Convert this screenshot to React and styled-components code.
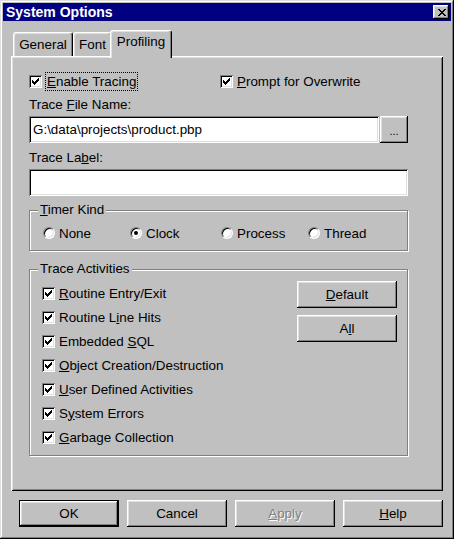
import React from "react";
import styled, { createGlobalStyle, css } from "styled-components";

const GlobalStyle = createGlobalStyle`
  html, body {
    margin: 0;
    padding: 0;
    background: #c0c0c0;
  }
  body {
    font-family: "Liberation Sans", Arial, sans-serif;
    font-size: 13.4px;
    color: #000;
  }
`;

const raised = css`
  box-shadow: inset -1px -1px #000, inset 1px 1px #fff, inset -2px -2px #808080,
    inset 2px 2px #dfdfdf;
`;

const sunken = css`
  box-shadow: inset 1px 1px #808080, inset -1px -1px #fff, inset 2px 2px #000,
    inset -2px -2px #dfdfdf;
`;

const CHECK = "M6 0h1v1h-1z M5 1h2v1h-2z M0 2h1v1h-1z M4 2h3v1h-3z M0 3h2v1h-2z M3 3h3v1h-3z M0 4h5v1h-5z M1 5h3v1h-3z M2 6h1v1h-1z";
const CROSS = "M0 0h2v1h-2z M6 0h2v1h-2z M1 1h2v1h-2z M5 1h2v1h-2z M2 2h4v1h-4z M3 3h2v1h-2z M2 4h4v1h-4z M1 5h2v1h-2z M5 5h2v1h-2z M0 6h2v1h-2z M6 6h2v1h-2z";

const activities = [
  { pre: "", key: "R", post: "outine Entry/Exit" },
  { pre: "Routine L", key: "i", post: "ne Hits" },
  { pre: "Embedded ", key: "S", post: "QL" },
  { pre: "", key: "O", post: "bject Creation/Destruction" },
  { pre: "", key: "U", post: "ser Defined Activities" },
  { pre: "S", key: "y", post: "stem Errors" },
  { pre: "", key: "G", post: "arbage Collection" },
];

const timers = ["None", "Clock", "Process", "Thread"];

function CheckBox() {
  return (
    <Box>
      <svg width="7" height="7" viewBox="0 0 7 7" shapeRendering="crispEdges">
        <path d={CHECK} fill="#000" />
      </svg>
    </Box>
  );
}

export default function App() {
  return (
    <>
      <GlobalStyle />
      <Window>
        <TitleBar>
          <Title>System Options</Title>
          <CloseButton>
            <svg width="8" height="7" viewBox="0 0 8 7" shapeRendering="crispEdges">
              <path d={CROSS} fill="#000" />
            </svg>
          </CloseButton>
        </TitleBar>
        <Body>
          <TabStrip>
            <Tab $w={60}>General</Tab>
            <Tab $w={39}>Font</Tab>
            <Tab $w={58} $active>
              Profiling
            </Tab>
          </TabStrip>
          <Panel>
            <TopRow>
              <CheckItem>
                <CheckBox />
                <Focus>
                  <U>E</U>nable Tracing
                </Focus>
              </CheckItem>
              <CheckItem>
                <CheckBox />
                <span>
                  <U>P</U>rompt for Overwrite
                </span>
              </CheckItem>
            </TopRow>

            <FieldLabel>
              Trace <U>F</U>ile Name:
            </FieldLabel>
            <InputRow>
              <TextBox>G:\data\projects\product.pbp</TextBox>
              <BrowseButton>...</BrowseButton>
            </InputRow>

            <FieldLabel>
              Trace La<U>b</U>el:
            </FieldLabel>
            <InputRow>
              <TextBox />
            </InputRow>

            <TimerGroup>
              <GroupTitle>
                <U>T</U>imer Kind
              </GroupTitle>
              {timers.map((t) => (
                <RadioItem key={t}>
                  <Radio $checked={t === "Clock"} />
                  {t}
                </RadioItem>
              ))}
            </TimerGroup>

            <ActivityGroup>
              <GroupTitle>Trace Activities</GroupTitle>
              <ActivityList>
                {activities.map((a) => (
                  <ActivityRow key={a.pre + a.key + a.post}>
                    <CheckBox />
                    <span>
                      {a.pre}
                      <U>{a.key}</U>
                      {a.post}
                    </span>
                  </ActivityRow>
                ))}
              </ActivityList>
              <SideButtons>
                <Button>
                  <U>D</U>efault
                </Button>
                <Button>
                  A<U>l</U>l
                </Button>
              </SideButtons>
            </ActivityGroup>
          </Panel>
          <Footer>
            <Button $default>OK</Button>
            <Button>Cancel</Button>
            <Button $disabled>
              <U>A</U>pply
            </Button>
            <Button>
              <U>H</U>elp
            </Button>
          </Footer>
        </Body>
      </Window>
    </>
  );
}

const Window = styled.div`
  width: 454px;
  height: 539px;
  box-sizing: border-box;
  padding: 3px;
  background: #c0c0c0;
  display: flex;
  flex-direction: column;
  box-shadow: inset -1px -1px #000, inset 1px 1px #dfdfdf, inset -2px -2px #808080,
    inset 2px 2px #fff;
`;

const TitleBar = styled.div`
  height: 18px;
  flex: none;
  background: #000080;
  display: flex;
  align-items: center;
  justify-content: space-between;
  padding: 0 2px 0 3px;
`;

const Title = styled.span`
  color: #fff;
  font-weight: bold;
  font-size: 14px;
`;

const CloseButton = styled.div`
  width: 16px;
  height: 14px;
  box-sizing: border-box;
  background: #c0c0c0;
  display: flex;
  align-items: center;
  justify-content: center;
  padding-left: 1px;
  ${raised}
`;

const Body = styled.div`
  flex: 1;
  display: flex;
  flex-direction: column;
  padding: 0 8px;
  min-height: 0;
`;

const TabStrip = styled.div`
  display: flex;
  align-items: flex-end;
  height: 28px;
  margin-top: 9px;
  margin-bottom: -2px;
  padding-left: 2px;
  position: relative;
  z-index: 1;
`;

const Tab = styled.div`
  width: ${(p) => p.$w}px;
  height: 24px;
  margin-bottom: 2px;
  box-sizing: border-box;
  background: #c0c0c0;
  display: flex;
  align-items: center;
  justify-content: center;
  border-left: 1px solid #fff;
  border-top: 1px solid #fff;
  border-right: 1px solid #000;
  border-radius: 3px 3px 0 0;
  box-shadow: inset -1px 0 #808080, inset 1px 1px #dfdfdf;
  ${(p) =>
    p.$active &&
    css`
      width: ${p.$w + 4}px;
      height: 28px;
      margin: 0 -2px;
      padding-bottom: 6px;
      position: relative;
      z-index: 2;
    `}
`;

const Panel = styled.div`
  flex: 1;
  box-sizing: border-box;
  padding: 16px 35px 0 18px;
  box-shadow: inset 1px 1px #fff, inset -1px -1px #000, inset 2px 2px #dfdfdf,
    inset -2px -2px #808080;
`;

const TopRow = styled.div`
  display: grid;
  grid-template-columns: 191px 1fr;
  height: 18px;
  align-items: center;
`;

const CheckItem = styled.div`
  display: flex;
  align-items: center;
  gap: 4px;
`;

const Focus = styled.span`
  outline: 1px dotted #000;
  padding: 0 1px;
  line-height: 17px;
`;

const U = styled.u`
  text-decoration: underline;
  text-underline-offset: 1px;
`;

const Box = styled.span`
  width: 13px;
  height: 13px;
  flex: none;
  box-sizing: border-box;
  background: #fff;
  display: flex;
  align-items: center;
  justify-content: center;
  ${sunken}
`;

const FieldLabel = styled.div`
  margin-top: 7px;
  line-height: 16px;
  height: 16px;
`;

const InputRow = styled.div`
  margin-top: 3px;
  display: flex;
  gap: 1px;
`;

const TextBox = styled.div`
  flex: 1;
  height: 27px;
  box-sizing: border-box;
  background: #fff;
  display: flex;
  align-items: center;
  padding: 0 4px;
  ${sunken}
`;

const BrowseButton = styled.div`
  width: 28px;
  height: 27px;
  box-sizing: border-box;
  background: #c0c0c0;
  display: flex;
  align-items: center;
  justify-content: center;
  font-size: 11px;
  padding-top: 3px;
  ${raised}
`;

const Group = styled.div`
  position: relative;
  box-sizing: border-box;
  border: 1px solid #808080;
  box-shadow: inset 1px 1px #fff, 1px 1px #fff;
`;

const GroupTitle = styled.span`
  position: absolute;
  top: -9px;
  left: 8px;
  padding: 0 2px;
  line-height: 16px;
  background: #c0c0c0;
`;

const TimerGroup = styled(Group)`
  margin-top: 14px;
  height: 41px;
  padding: 5px 0 0 13px;
  display: grid;
  grid-template-columns: 87px 91px 87px 1fr;
  align-items: center;
`;

const RadioItem = styled.div`
  display: flex;
  align-items: center;
  gap: 4px;
`;

const Radio = styled.span`
  width: 12px;
  height: 12px;
  flex: none;
  box-sizing: border-box;
  border-radius: 50%;
  background: #fff;
  border: 1px solid;
  border-color: #808080 #fff #fff #808080;
  box-shadow: inset 1px 1px #000, inset -1px -1px #dfdfdf;
  display: flex;
  align-items: center;
  justify-content: center;
  &::after {
    content: "";
    width: 4px;
    height: 4px;
    border-radius: 50%;
    background: ${(p) => (p.$checked ? "#000" : "transparent")};
  }
`;

const ActivityGroup = styled(Group)`
  margin-top: 18px;
  height: 187px;
  padding: 11px 10px 0 12px;
  display: grid;
  grid-template-columns: 1fr 100px;
  align-items: start;
`;

const ActivityList = styled.div`
  display: flex;
  flex-direction: column;
`;

const ActivityRow = styled.div`
  height: 24px;
  display: flex;
  align-items: center;
  gap: 4px;
`;

const SideButtons = styled.div`
  display: flex;
  flex-direction: column;
  gap: 7px;
`;

const Button = styled.div`
  width: 100px;
  height: 27px;
  box-sizing: border-box;
  background: #c0c0c0;
  display: flex;
  align-items: center;
  justify-content: center;
  ${raised}
  ${(p) =>
    p.$default &&
    css`
      border: 1px solid #000;
    `}
  ${(p) =>
    p.$disabled &&
    css`
      color: #808080;
      text-shadow: 1px 1px #fff;
    `}
`;

const Footer = styled.div`
  display: flex;
  gap: 8px;
  height: 27px;
  margin: 9px 0;
  padding-left: 8px;
`;
